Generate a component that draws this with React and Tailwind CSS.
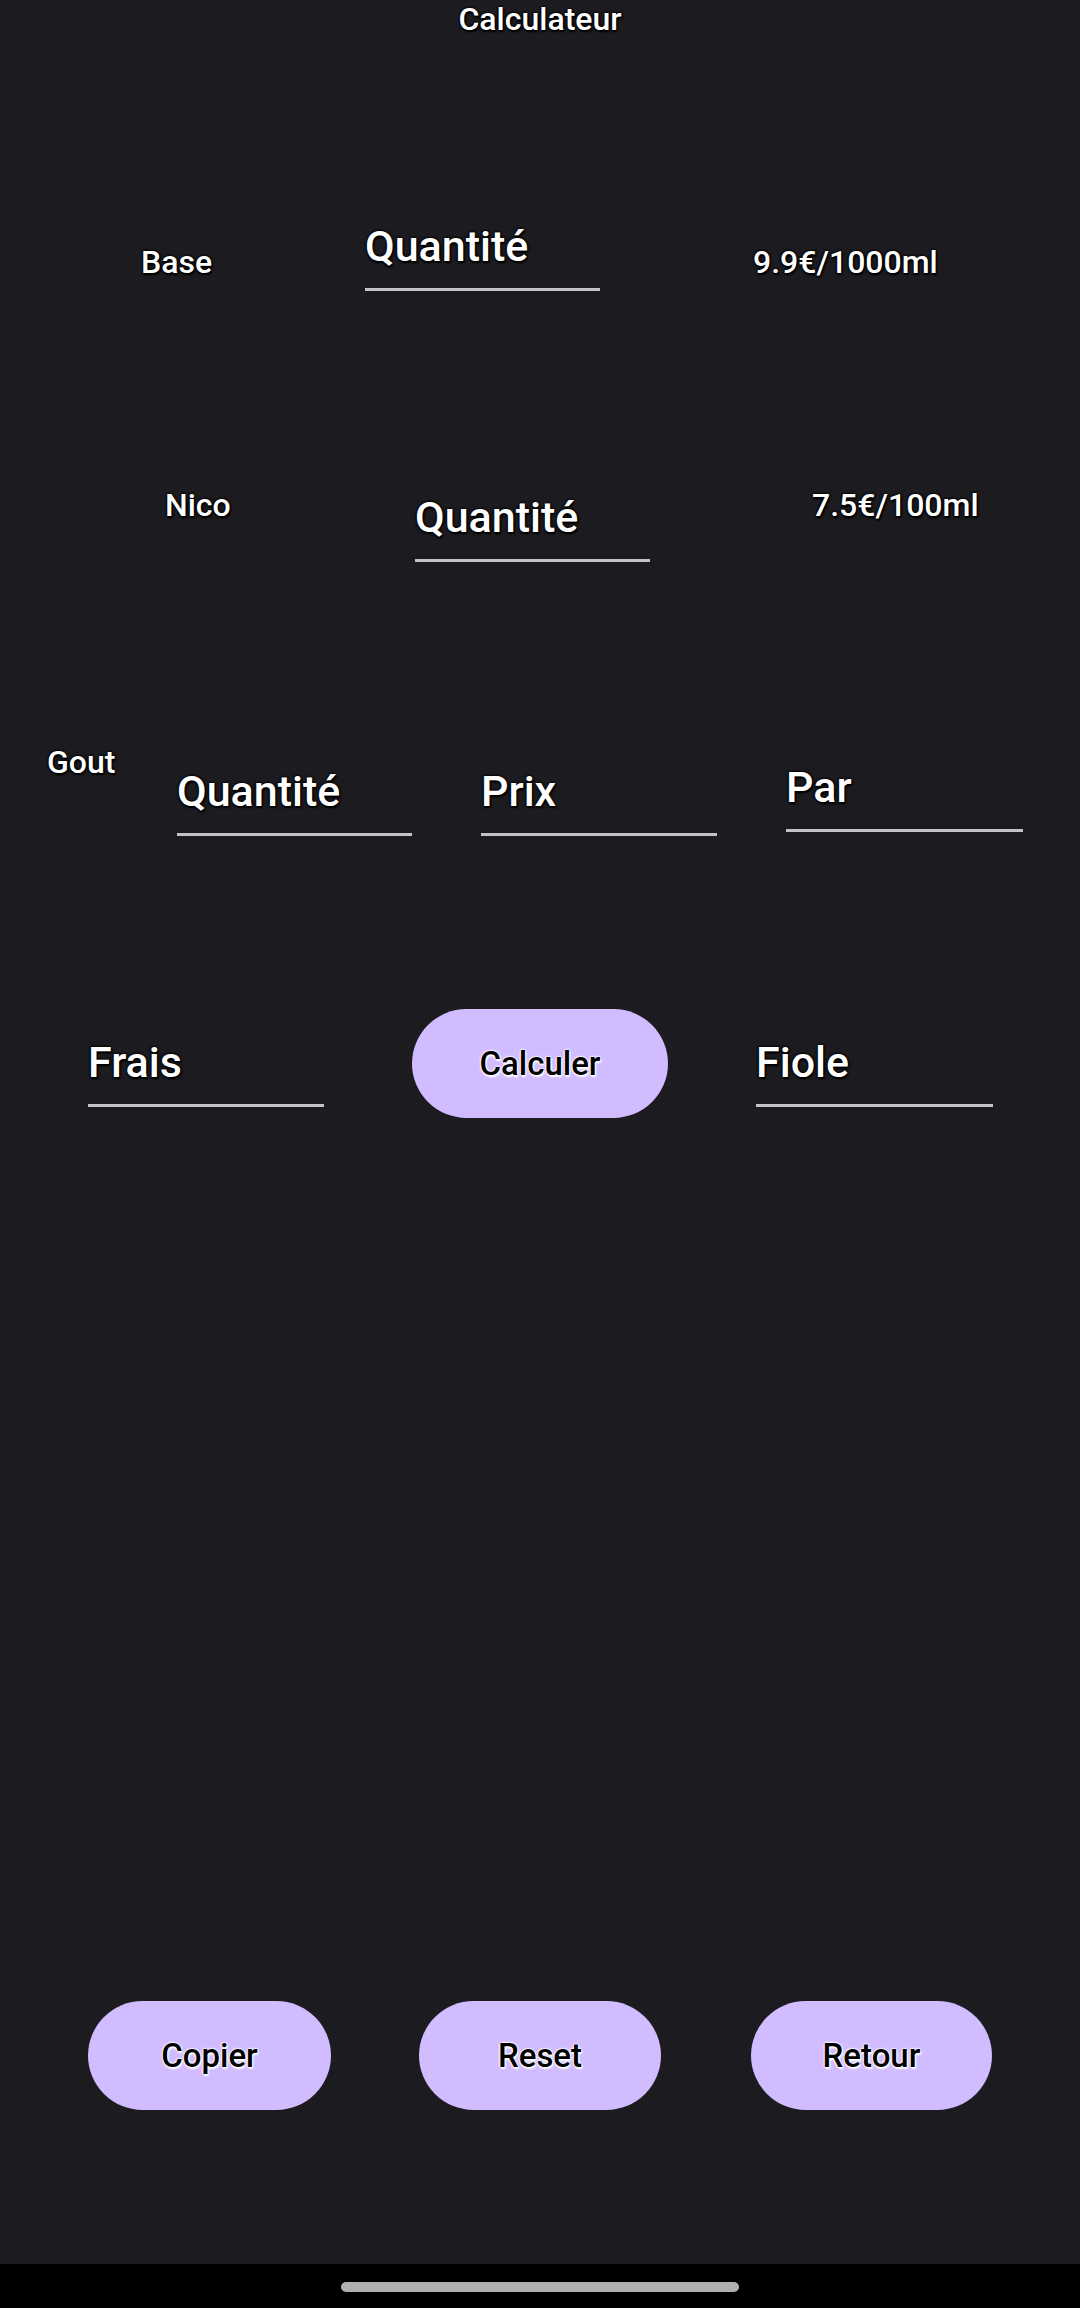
import React from 'react';

const font = { fontFamily: 'Roboto, "Noto Sans", sans-serif' };

const darkHalo = '[text-shadow:0_0_2px_#000,0_0_2px_#000,0_0_3px_#000,1px_2px_2px_#000]';
const lightHalo = '[text-shadow:0_0_2px_#fff,0_0_2px_#fff,0_0_3px_#fff,1px_2px_2px_#fff]';

// EditText-like field: hint text + grey underline
const Field = ({ hint, className = '' }) => (
  <div className={`flex flex-col ${className}`}>
    <div className={`h-[50px] text-[43px] font-medium leading-[50px] text-white ${darkHalo}`}>{hint}</div>
    <div className="h-[17px]" />
    <div className="h-[3px] bg-[#c2c2c8]" />
  </div>
);

const Label = ({ children, className = '' }) => (
  <div className={`h-[38px] text-[32px] font-medium leading-[38px] text-white whitespace-nowrap ${darkHalo} ${className}`}>
    {children}
  </div>
);

const PillButton = ({ children, className = '' }) => (
  <button
    className={`flex h-[109px] shrink-0 items-center justify-center rounded-full bg-[#d0bcff] text-[33px] font-medium text-black ${lightHalo} ${className}`}
  >
    {children}
  </button>
);

export default function App() {
  return (
    <div style={font} className="flex h-[2308px] w-[1080px] flex-col bg-[#1c1b1f]">
      {/* title */}
      <div className={`h-[38px] text-center text-[32px] font-medium leading-[38px] text-white ${darkHalo}`}>Calculateur</div>

      {/* Base */}
      <div className="mt-[183px] flex items-start">
        <div className="w-[365px] shrink-0 pl-[141px] pt-[22px]">
          <Label>Base</Label>
        </div>
        <Field hint="Quantité" className="w-[235px] shrink-0" />
        <Label className="ml-[153px] mt-[22px]">9.9€/1000ml</Label>
      </div>

      {/* Nico */}
      <div className="mt-[195px] flex items-start">
        <div className="w-[415px] shrink-0 pl-[165px]">
          <Label>Nico</Label>
        </div>
        <Field hint="Quantité" className="mt-[6px] w-[235px] shrink-0" />
        <Label className="ml-[162px]">7.5€/100ml</Label>
      </div>

      {/* Gout */}
      <div className="mt-[181px] flex items-start">
        <div className="w-[177px] shrink-0 pl-[47px]">
          <Label>Gout</Label>
        </div>
        <Field hint="Quantité" className="mt-[23px] w-[235px] shrink-0" />
        <Field hint="Prix" className="ml-[69px] mt-[23px] w-[236px] shrink-0" />
        <Field hint="Par" className="ml-[69px] mt-[19px] w-[237px] shrink-0" />
      </div>

      {/* Frais / Calculer / Fiole */}
      <div className="mt-[173px] flex items-start">
        <Field hint="Frais" className="ml-[88px] mt-[28px] w-[236px] shrink-0" />
        <PillButton className="ml-[88px] w-[256px]">Calculer</PillButton>
        <Field hint="Fiole" className="ml-[88px] mt-[28px] w-[237px] shrink-0" />
      </div>

      <div className="flex-1" />

      {/* bottom actions */}
      <div className="flex items-start">
        <PillButton className="ml-[88px] w-[243px]">Copier</PillButton>
        <PillButton className="ml-[88px] w-[242px]">Reset</PillButton>
        <PillButton className="ml-[90px] w-[241px]">Retour</PillButton>
      </div>

      <div className="h-[154px]" />

      {/* gesture nav bar */}
      <div className="flex h-[44px] justify-center bg-black pt-[18px]">
        <div className="h-[10px] w-[398px] rounded-full bg-[#b0b0b0]" />
      </div>
    </div>
  );
}
